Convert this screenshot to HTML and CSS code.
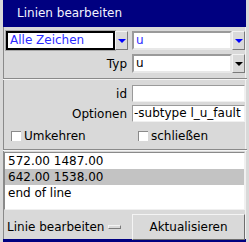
FILE: index.html
```html
<!DOCTYPE html>
<html lang="de">
  <head>
    <meta charset="UTF-8" />
    <title>Linien bearbeiten</title>
    <link rel="stylesheet" href="styles.css">
  </head>
  <body>
    <div class="window">
      <div class="titlebar">Linien bearbeiten</div>

      <div class="content">
        <!-- Auswahl -->
        <div class="grid-row first">
          <div class="combo focused">
            <div class="combo-field blue">Alle Zeichen</div>
            <div class="arrow-btn"><span class="arrow blue-arrow"></span></div>
          </div>
          <div class="combo">
            <div class="combo-field blue">u</div>
            <div class="arrow-btn"><span class="arrow blue-arrow"></span></div>
          </div>
        </div>

        <div class="grid-row">
          <span class="label">Typ</span>
          <div class="combo">
            <div class="combo-field">u</div>
            <div class="arrow-btn"><span class="arrow"></span></div>
          </div>
        </div>

        <div class="separator"></div>

        <div class="grid-row field-row">
          <span class="label">id</span>
          <div class="entry"></div>
        </div>
        <div class="grid-row field-row">
          <span class="label">Optionen</span>
          <div class="entry">-subtype l_u_fault</div>
        </div>

        <div class="grid-row checks">
          <label class="check"><span class="box"></span>Umkehren</label>
          <label class="check"><span class="box"></span>schließen</label>
        </div>

        <div class="separator"></div>

        <div class="listbox">
          <div class="list-item">572.00 1487.00</div>
          <div class="list-item selected">642.00 1538.00</div>
          <div class="list-item">end of line</div>
        </div>

        <div class="grid-row buttons">
          <div class="menubutton">Linie bearbeiten <span class="indicator"></span></div>
          <div class="button">Aktualisieren</div>
        </div>
      </div>
    </div>
    <div class="next-window"></div>
  </body>
</html>
```

FILE: styles.css
```css
/* Global */
body {
  margin: 0;
  background: #d9d9d9;
  font-family: "DejaVu Sans", sans-serif;
  font-size: 12px;
  color: #000;
}

/* Window frame */
.window {
  width: 249px;
  height: 239px;
  box-sizing: border-box;
  border-left: 3px solid #d9d9d9;
  border-right: 3px solid #d9d9d9;
  box-shadow: inset 1px 0 0 #8a8a8a, inset -1px 0 0 #f0f0f0;
  display: flex;
  flex-direction: column;
}

.titlebar {
  height: 27px;
  line-height: 27px;
  background: #000080;
  color: #f4f4ff;
  padding-left: 14px;
}

.content {
  padding: 0 1px 0 2px;
  display: flex;
  flex-direction: column;
}

/* two column rows */
.grid-row {
  display: grid;
  grid-template-columns: 123px 113px;
  column-gap: 4px;
  align-items: center;
  margin-top: 4px;
}

.label {
  text-align: right;
  padding-right: 1px;
}

/* Combobox */
.combo {
  display: flex;
  height: 19px;
}

.combo-field {
  flex: 1;
  background: #fff;
  border: 2px solid;
  border-color: #9a9a9a #e8e8e8 #e8e8e8 #9a9a9a;
  padding-left: 2px;
  line-height: 15px;
  overflow: hidden;
}

.combo.focused .combo-field {
  border: 2px solid #000;
  box-shadow: 0 0 0 1px #a8a8a8;
  margin-left: 1px;
}

.blue {
  color: #2b2bff;
}

.arrow-btn {
  width: 13px;
  box-sizing: border-box;
  border: 1px solid;
  border-color: #f2f2f2 #7a7a7a #7a7a7a #f2f2f2;
  display: flex;
  align-items: center;
  justify-content: center;
}

.arrow {
  width: 0;
  height: 0;
  border-left: 4px solid transparent;
  border-right: 4px solid transparent;
  border-top: 4px solid #000;
}

.blue-arrow {
  border-top-color: #0000ff;
}

/* Separator */
.separator {
  height: 0;
  border-top: 1px solid #8a8a8a;
  border-bottom: 1px solid #f4f4f4;
  margin: 5px -2px 0 -2px;
}

/* Entry */
.field-row {
  margin-top: 5px;
}

.field-row + .field-row {
  margin-top: 3px;
}

.entry {
  height: 17px;
  box-sizing: border-box;
  background: #fff;
  border: 1px solid;
  border-color: #9a9a9a #f0f0f0 #f0f0f0 #9a9a9a;
  padding-left: 1px;
  line-height: 15px;
  white-space: nowrap;
  overflow: hidden;
}

/* Checkboxes */
.checks {
  margin-top: 6px;
  height: 16px;
}

.check {
  display: flex;
  align-items: center;
  gap: 3px;
  padding-left: 6px;
}

.box {
  width: 9px;
  height: 9px;
  background: #fff;
  border-top: 1px solid #8a8a8a;
  border-left: 1px solid #8a8a8a;
}

/* Listbox */
.listbox {
  margin: 1px 0 0 -1px;
  height: 56px;
  background: #fff;
  border: 1px solid;
  border-color: #8a8a8a #f0f0f0 #f0f0f0 #8a8a8a;
}

.list-item {
  height: 16px;
  line-height: 16px;
  padding-left: 3px;
  white-space: nowrap;
}

.list-item.selected {
  background: #c3c3c3;
}

/* Bottom buttons */
.buttons {
  margin-top: 2px;
  height: 29px;
}

.menubutton {
  display: flex;
  align-items: center;
  padding-left: 2px;
  gap: 4px;
}

.indicator {
  width: 11px;
  height: 2px;
  border: 1px solid;
  border-color: #f4f4f4 #7a7a7a #7a7a7a #f4f4f4;
  background: #d9d9d9;
}

.button {
  height: 26px;
  box-sizing: border-box;
  border: 1px solid;
  border-color: #f4f4f4 #6e6e6e #6e6e6e #f4f4f4;
  display: flex;
  align-items: center;
  justify-content: center;
}

.next-window {
  height: 3px;
  background: #000080;
  margin: 0 3px;
}
```
